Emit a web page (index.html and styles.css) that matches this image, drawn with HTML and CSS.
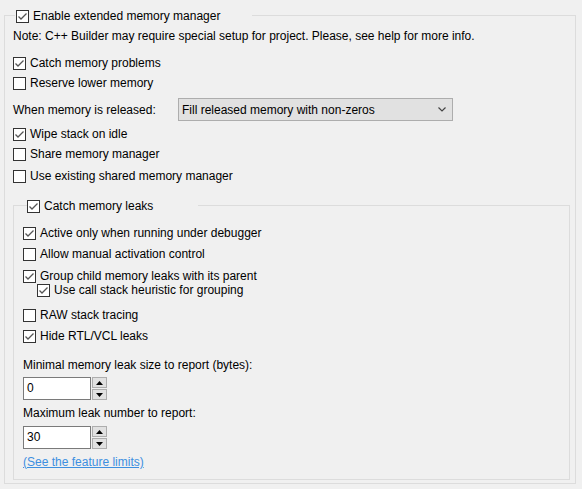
FILE: index.html
```html
<!DOCTYPE html>
<html>
<head>
<meta charset="utf-8">
<link rel="stylesheet" href="styles.css">
</head>
<body>
<fieldset class="group outer">
  <legend class="legend legend-outer">
    <span class="check"><span class="box"><svg class="tick" viewBox="0 0 11 11"><path d="M1.5 5.5 L4 8 L9.5 2.5"/></svg></span><span class="cap">Enable extended memory manager</span></span>
  </legend>
  <p class="note">Note: C++ Builder may require special setup for project. Please, see help for more info.</p>
  <div class="check row-problems"><span class="box"><svg class="tick" viewBox="0 0 11 11"><path d="M1.5 5.5 L4 8 L9.5 2.5"/></svg></span><span class="cap">Catch memory problems</span></div>
  <div class="check row-reserve"><span class="box"></span><span class="cap">Reserve lower memory</span></div>
  <div class="released">
    <span class="released-label">When memory is released:</span>
    <div class="combo"><span class="combo-text">Fill released memory with non-zeros</span><svg class="chev" viewBox="0 0 8 5"><path d="M0.5 0.5 L4 4 L7.5 0.5"/></svg></div>
  </div>
  <div class="check row-wipe"><span class="box"><svg class="tick" viewBox="0 0 11 11"><path d="M1.5 5.5 L4 8 L9.5 2.5"/></svg></span><span class="cap">Wipe stack on idle</span></div>
  <div class="check row-share"><span class="box"></span><span class="cap">Share memory manager</span></div>
  <div class="check row-existing"><span class="box"></span><span class="cap">Use existing shared memory manager</span></div>

  <fieldset class="group inner">
    <legend class="legend legend-inner">
      <span class="check"><span class="box"><svg class="tick" viewBox="0 0 11 11"><path d="M1.5 5.5 L4 8 L9.5 2.5"/></svg></span><span class="cap">Catch memory leaks</span></span>
    </legend>
    <div class="check row-active"><span class="box"><svg class="tick" viewBox="0 0 11 11"><path d="M1.5 5.5 L4 8 L9.5 2.5"/></svg></span><span class="cap">Active only when running under debugger</span></div>
    <div class="check row-allow"><span class="box"></span><span class="cap">Allow manual activation control</span></div>
    <div class="check row-group"><span class="box"><svg class="tick" viewBox="0 0 11 11"><path d="M1.5 5.5 L4 8 L9.5 2.5"/></svg></span><span class="cap">Group child memory leaks with its parent</span></div>
    <div class="check row-callstack"><span class="box"><svg class="tick" viewBox="0 0 11 11"><path d="M1.5 5.5 L4 8 L9.5 2.5"/></svg></span><span class="cap">Use call stack heuristic for grouping</span></div>
    <div class="check row-raw"><span class="box"></span><span class="cap">RAW stack tracing</span></div>
    <div class="check row-hide"><span class="box"><svg class="tick" viewBox="0 0 11 11"><path d="M1.5 5.5 L4 8 L9.5 2.5"/></svg></span><span class="cap">Hide RTL/VCL leaks</span></div>

    <p class="field-label label-min">Minimal memory leak size to report (bytes):</p>
    <div class="spin spin-min">
      <div class="spin-input">0</div>
      <div class="spin-buttons">
        <span class="spin-btn"><svg viewBox="0 0 7 4"><path d="M3.5 0 L7 4 L0 4Z"/></svg></span>
        <span class="spin-btn"><svg viewBox="0 0 7 4"><path d="M0 0 L7 0 L3.5 4Z"/></svg></span>
      </div>
    </div>

    <p class="field-label label-max">Maximum leak number to report:</p>
    <div class="spin spin-max">
      <div class="spin-input">30</div>
      <div class="spin-buttons">
        <span class="spin-btn"><svg viewBox="0 0 7 4"><path d="M3.5 0 L7 4 L0 4Z"/></svg></span>
        <span class="spin-btn"><svg viewBox="0 0 7 4"><path d="M0 0 L7 0 L3.5 4Z"/></svg></span>
      </div>
    </div>

    <a class="link" href="#">(See the feature limits)</a>
  </fieldset>
</fieldset>
</body>
</html>
```

FILE: styles.css
```css
html, body {
  margin: 0;
  padding: 0;
  background: #f0f0f0;
}
body {
  font-family: "Liberation Sans", Arial, sans-serif;
  font-size: 12px;
  color: #000;
  width: 582px;
  height: 489px;
  overflow: hidden;
}
p { margin: 0; }

.group {
  border: 1px solid #dcdcdc;
  margin: 0;
  min-width: 0;
  box-sizing: border-box;
}
.outer {
  margin: 10px 6px 0 4px;
  padding: 0 5px 3px 8px;
}
.inner {
  margin: 17px 0 0 0;
  padding: 0 0 9px 9px;
}
.legend {
  height: 11px;
  padding: 0;
  box-sizing: border-box;
}
.legend-outer {
  margin-left: 2px;
  padding-left: 1px;
  width: 237px;
}
.legend-inner {
  margin-left: 4px;
  width: 171px;
}

.check {
  display: flex;
  align-items: flex-start;
  height: 13px;
  line-height: 13px;
  white-space: nowrap;
}
.box {
  flex: none;
  width: 13px;
  height: 13px;
  box-sizing: border-box;
  border: 1px solid #333;
  background: #fff;
  display: block;
}
.tick {
  display: block;
  width: 11px;
  height: 11px;
  fill: none;
  stroke: #555;
  stroke-width: 1.3;
}
.cap {
  margin-left: 4px;
}

.note {
  margin-top: 7px;
  line-height: 16px;
  white-space: nowrap;
}
.row-problems { margin-top: 13px; }
.row-reserve { margin-top: 7px; }
.released {
  margin-top: 8px;
  display: flex;
  align-items: center;
  height: 23px;
}
.released-label {
  width: 165px;
  flex: none;
}
.combo {
  width: 275px;
  height: 23px;
  box-sizing: border-box;
  border: 1px solid #adadad;
  background: #e1e1e1;
  display: flex;
  align-items: center;
  padding: 0 0 0 3px;
}
.combo-text { flex: 1; }
.chev {
  width: 8px;
  height: 5px;
  margin-right: 6px;
  fill: none;
  stroke: #444;
  stroke-width: 1.2;
}
.row-wipe { margin-top: 7px; }
.row-share { margin-top: 7px; }
.row-existing { margin-top: 9px; }

.row-active { margin-top: 16px; }
.row-allow { margin-top: 8px; }
.row-group { margin-top: 9px; }
.row-callstack { margin-top: 1px; margin-left: 14px; }
.row-raw { margin-top: 12px; }
.row-hide { margin-top: 8px; }

.field-label {
  line-height: 16px;
  white-space: nowrap;
}
.label-min { margin-top: 14px; }
.label-max { margin-top: 5px; }
.spin {
  display: flex;
  height: 23px;
  margin-top: 4px;
}
.spin-max { margin-top: 5px; }
.spin-input {
  width: 68px;
  height: 23px;
  box-sizing: border-box;
  border: 1px solid #7a7a7a;
  background: #fff;
  padding-left: 3px;
  line-height: 21px;
}
.spin-buttons {
  margin-left: 1px;
  width: 15px;
  display: flex;
  flex-direction: column;
  justify-content: space-between;
}
.spin-btn {
  height: 11px;
  box-sizing: border-box;
  border: 1px solid #adadad;
  background: #e1e1e1;
  display: flex;
  align-items: center;
  justify-content: center;
}
.spin-btn svg {
  width: 7px;
  height: 4px;
  fill: #000;
}
.link {
  display: block;
  margin-top: 5px;
  line-height: 16px;
  color: #3d8fe0;
  text-decoration: underline;
  width: max-content;
}
```
